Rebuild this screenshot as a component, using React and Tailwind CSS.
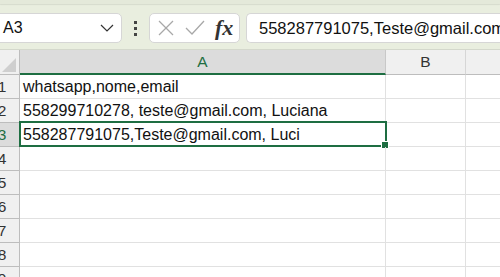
import React from "react";

const rows = [
  "whatsapp,nome,email",
  "558299710278, teste@gmail.com, Luciana",
  "558287791075,Teste@gmail.com, Luci",
  "",
  "",
  "",
  "",
  "",
  "",
];

const App = () => {
  return (
    <div
      className="w-[500px] h-[277px] overflow-hidden bg-white text-[#111]"
      style={{ fontFamily: '"Liberation Sans", Arial, sans-serif' }}
    >
      {/* Formula bar */}
      <div className="h-[50px] bg-[#e9eedf] border-b border-[#d4d8cc] flex flex-col">
        <div className="h-[4px] bg-[#e4e9da] shadow-[0_1px_1px_rgba(0,0,0,0.08)]"></div>
        <div className="flex items-center mt-[9px] h-[30px]">
          {/* Name box */}
          <div className="-ml-[6px] w-[128px] h-[30px] bg-white rounded-[5px] border border-[#d6d6d6] flex items-center pl-[8px] pr-[6px]">
            <span className="text-[16px] flex-1">A3</span>
            <svg width="14" height="8" viewBox="0 0 14 8" className="mr-[1px]">
              <polyline points="1,1 7,7 13,1" fill="none" stroke="#333" strokeWidth="1.2" />
            </svg>
          </div>
          {/* Dots */}
          <div className="w-[27px] flex flex-col items-center gap-[3px]">
            <div className="w-[3px] h-[3px] bg-[#444]"></div>
            <div className="w-[3px] h-[3px] bg-[#444]"></div>
            <div className="w-[3px] h-[3px] bg-[#444]"></div>
          </div>
          {/* Icon box */}
          <div className="w-[91px] h-[30px] bg-white rounded-[5px] border border-[#d6d6d6] flex items-center pl-[8px]">
            <svg width="16" height="16" viewBox="0 0 16 16">
              <line x1="1" y1="1" x2="15" y2="15" stroke="#a8a8a8" strokeWidth="1.3" />
              <line x1="15" y1="1" x2="1" y2="15" stroke="#a8a8a8" strokeWidth="1.3" />
            </svg>
            <svg width="20" height="16" viewBox="0 0 20 16" className="ml-[11px]">
              <polyline points="1,8 7,14 19,1" fill="none" stroke="#a8a8a8" strokeWidth="1.3" />
            </svg>
            <span
              className="ml-[10px] text-[22px] italic font-semibold text-[#333] leading-none"
              style={{ fontFamily: '"Liberation Serif", "Times New Roman", serif' }}
            >
              fx
            </span>
          </div>
          {/* Formula input */}
          <div className="ml-[6px] flex-1 h-[30px] bg-white rounded-l-[5px] border border-r-0 border-[#d6d6d6] flex items-center pl-[12px] overflow-hidden whitespace-nowrap">
            <span className="text-[16.5px]">558287791075,Teste@gmail.com</span>
          </div>
        </div>
      </div>

      {/* Column headers */}
      <div className="flex h-[25px]">
        <div className="w-[20px] bg-[#f0f0f0] border-r border-b border-[#bdbdbd] relative">
          <svg width="14" height="14" viewBox="0 0 14 14" className="absolute right-[3px] bottom-[2px]">
            <polygon points="14,0 14,14 0,14" fill="#cfcfcf" />
          </svg>
        </div>
        <div className="w-[366px] bg-[#dcdcdc] border-b-2 border-[#1e6e42] border-r border-r-[#c8c8c8] flex items-center justify-center text-[15.5px] text-[#1e6e42]">
          A
        </div>
        <div className="w-[80px] bg-[#f0f0f0] border-b border-[#bdbdbd] border-r border-r-[#d6d6d6] flex items-center justify-center text-[15.5px] text-[#333]">
          B
        </div>
        <div className="flex-1 bg-[#f0f0f0] border-b border-[#bdbdbd]"></div>
      </div>

      {/* Rows */}
      {rows.map((text, i) => {
        const active = i === 2;
        return (
          <div key={i} className="flex h-[24px]">
            <div
              className={
                active
                  ? "w-[20px] bg-[#dcdcdc] border-r border-b border-[#bdbdbd] overflow-hidden"
                  : "w-[20px] bg-[#f0f0f0] border-r border-b border-[#bdbdbd] overflow-hidden"
              }
            >
              <div
                className={
                  active
                    ? "w-[24px] -ml-[10px] text-center text-[15.5px] leading-[23px] text-[#1e6e42]"
                    : "w-[24px] -ml-[10px] text-center text-[15.5px] leading-[23px] text-[#333]"
                }
              >
                {i + 1}
              </div>
            </div>
            <div className="w-[366px] border-r border-b border-[#e1e1e1] relative">
              <div className="pl-[3px] text-[16px] leading-[23px] whitespace-nowrap">{text}</div>
              {active && (
                <div className="absolute -top-[2px] -left-[1px] -right-[2px] -bottom-[1px] border-2 border-[#1e6e42]">
                  <div className="absolute -right-[4px] -bottom-[4px] w-[6px] h-[6px] bg-[#1e6e42] border border-white box-content"></div>
                </div>
              )}
            </div>
            <div className="w-[80px] border-r border-b border-[#e1e1e1]"></div>
            <div className="flex-1 border-b border-[#e1e1e1]"></div>
          </div>
        );
      })}
    </div>
  );
};

export default App;
